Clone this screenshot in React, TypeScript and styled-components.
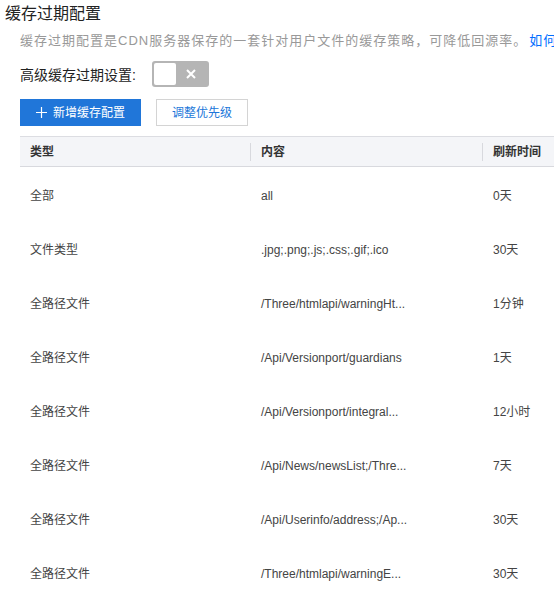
import React from "react";
import styled, { createGlobalStyle } from "styled-components";

const GlobalStyle = createGlobalStyle`
    html, body {
        margin: 0;
        padding: 0;
        background: #fff;
        overflow: hidden;
    }
    body {
        font-family: "Liberation Sans", "Noto Sans CJK SC", sans-serif;
        color: #333;
    }
`;

const Page = styled.div`
    width: 554px;
    height: 594px;
    overflow: hidden;
`;

const Title = styled.h2`
    margin: 0;
    padding: 3px 0 0 5px;
    height: 22px;
    font-size: 16px;
    font-weight: normal;
    line-height: 22px;
    color: #222;
`;

const Body = styled.div`
    padding-left: 20px;
`;

const Desc = styled.p`
    margin: 6px 0 0;
    white-space: nowrap;
    font-size: 13px;
    letter-spacing: 1px;
    line-height: 20px;
    color: #999;
`;

const Link = styled.a`
    margin-left: 2px;
    color: #006eff;
    text-decoration: none;
`;

const SettingRow = styled.div`
    display: flex;
    align-items: center;
    gap: 16px;
    margin-top: 10px;
    height: 26px;
`;

const Label = styled.span`
    font-size: 14px;
    color: #222;
`;

const Toggle = styled.div`
    display: flex;
    align-items: center;
    width: 57px;
    height: 26px;
    box-sizing: border-box;
    padding: 2px;
    border-radius: 3px;
    background: #b5b5b5;
`;

const Knob = styled.span`
    width: 22px;
    height: 22px;
    border-radius: 2px;
    background: #fff;
`;

const ToggleMark = styled.span`
    flex: 1;
    display: flex;
    justify-content: center;
`;

const Toolbar = styled.div`
    display: flex;
    gap: 15px;
    margin-top: 12px;
`;

const Button = styled.button<{ $primary?: boolean }>`
    display: flex;
    align-items: center;
    gap: 6px;
    height: 27px;
    padding: 0 15px;
    box-sizing: border-box;
    border: 1px solid ${(p) => (p.$primary ? "#2076d9" : "#d4d4d4")};
    border-radius: 0;
    background: ${(p) => (p.$primary ? "#2076d9" : "#fff")};
    color: ${(p) => (p.$primary ? "#fff" : "#2076d9")};
    font-family: "Liberation Sans", "Noto Sans CJK SC", sans-serif;
    font-size: 12px;
    line-height: 18px;
    cursor: pointer;
`;

const Table = styled.div`
    margin-top: 10px;
    width: 600px;
    border-top: 1px solid #dcdde2;
`;

const Row = styled.div<{ $head?: boolean }>`
    display: grid;
    grid-template-columns: 230px 232px 1fr;
    align-items: center;
    box-sizing: border-box;
    height: ${(p) => (p.$head ? "30px" : "54px")};
    padding-top: ${(p) => (p.$head ? "0" : "3px")};
    background: ${(p) => (p.$head ? "#f4f5f8" : "#fff")};
    border-bottom: ${(p) => (p.$head ? "1px solid #d8d9de" : "none")};
    font-size: 12px;
    line-height: 18px;
    color: ${(p) => (p.$head ? "#222" : "#444")};
`;

const Cell = styled.div<{ $sep?: boolean }>`
    padding-left: ${(p) => (p.$sep ? "11px" : "10px")};
    white-space: nowrap;
    overflow: hidden;
    position: relative;
`;

const HeadCell = styled(Cell)`
    font-weight: bold;
    color: #333;

    &::before {
        content: "";
        display: ${(p) => (p.$sep ? "block" : "none")};
        position: absolute;
        left: 0;
        top: -1px;
        bottom: -1px;
        width: 1px;
        background: #d8d9de;
    }
`;

const PlusIcon = () => (
    <svg width="11" height="11" viewBox="0 0 11 11">
        <path d="M5.5 0v11M0 5.5h11" stroke="#fff" strokeWidth="1.2" />
    </svg>
);

const CloseIcon = () => (
    <svg width="10" height="10" viewBox="0 0 10 10">
        <path d="M1 1l8 8M9 1l-8 8" stroke="#fff" strokeWidth="2" />
    </svg>
);

const rows = [
    ["全部", "all", "0天"],
    ["文件类型", ".jpg;.png;.js;.css;.gif;.ico", "30天"],
    ["全路径文件", "/Three/htmlapi/warningHt...", "1分钟"],
    ["全路径文件", "/Api/Versionport/guardians", "1天"],
    ["全路径文件", "/Api/Versionport/integral...", "12小时"],
    ["全路径文件", "/Api/News/newsList;/Thre...", "7天"],
    ["全路径文件", "/Api/Userinfo/address;/Ap...", "30天"],
    ["全路径文件", "/Three/htmlapi/warningE...", "30天"],
];

const App: React.FC = () => {
    return (
        <Page>
            <GlobalStyle />
            <Title>缓存过期配置</Title>
            <Body>
                <Desc>
                    缓存过期配置是CDN服务器保存的一套针对用户文件的缓存策略，可降低回源率。
                    <Link href="#">如何设置缓存过期时间</Link>
                </Desc>

                <SettingRow>
                    <Label>高级缓存过期设置:</Label>
                    <Toggle>
                        <Knob />
                        <ToggleMark>
                            <CloseIcon />
                        </ToggleMark>
                    </Toggle>
                </SettingRow>

                <Toolbar>
                    <Button $primary>
                        <PlusIcon />
                        新增缓存配置
                    </Button>
                    <Button>调整优先级</Button>
                </Toolbar>

                <Table>
                    <Row $head>
                        <HeadCell>类型</HeadCell>
                        <HeadCell $sep>内容</HeadCell>
                        <HeadCell $sep>刷新时间</HeadCell>
                    </Row>
                    {rows.map((r, i) => (
                        <Row key={i}>
                            <Cell>{r[0]}</Cell>
                            <Cell $sep>{r[1]}</Cell>
                            <Cell $sep>{r[2]}</Cell>
                        </Row>
                    ))}
                </Table>
            </Body>
        </Page>
    );
};

export default App;
